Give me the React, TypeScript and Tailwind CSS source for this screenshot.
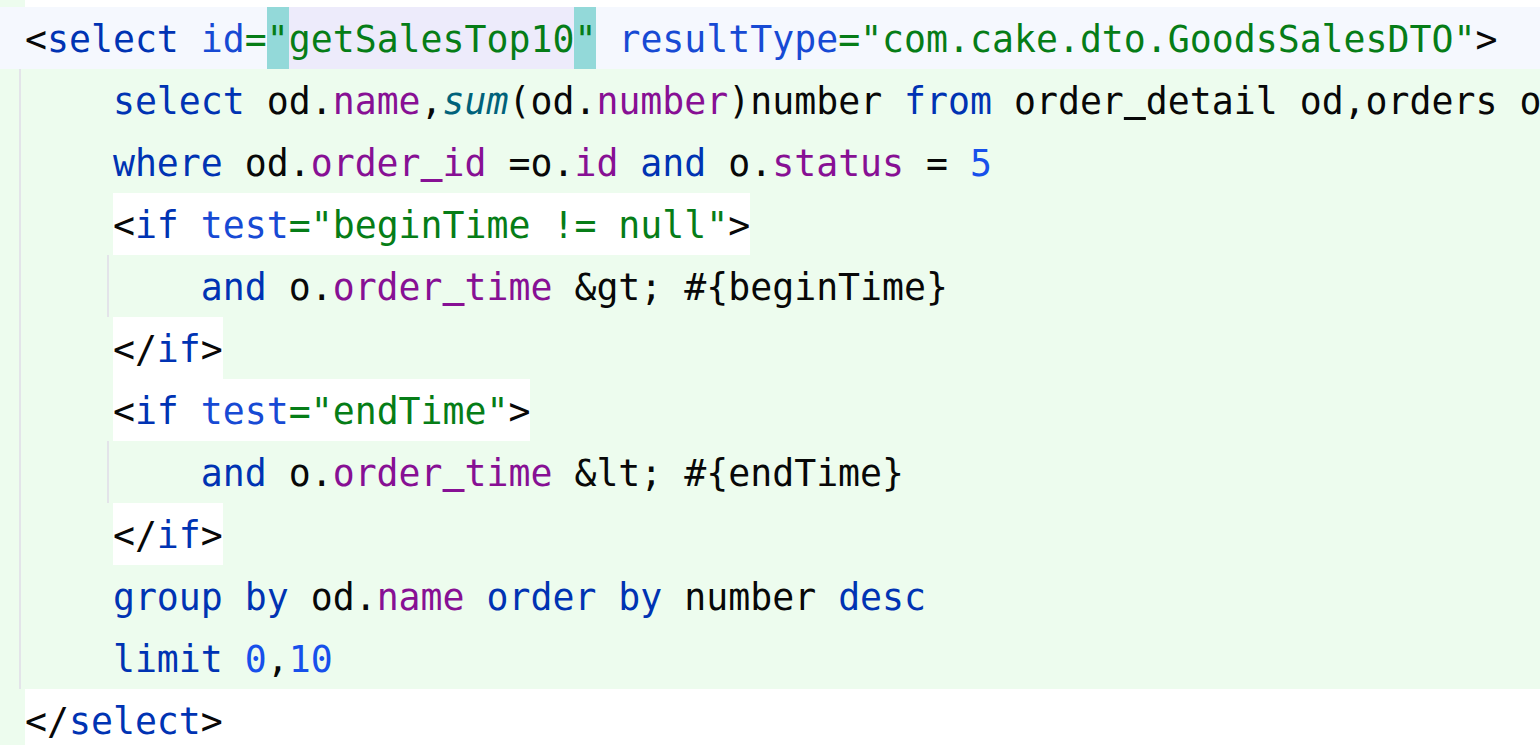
import React from 'react';

type P = { children?: React.ReactNode };

// token colours
const Br = ({ children }: P) => <span className="text-[#080808]">{children}</span>;
const Tag = ({ children }: P) => <span className="text-[#0033b3]">{children}</span>;
const Attr = ({ children }: P) => <span className="text-[#174ad4]">{children}</span>;
const Val = ({ children }: P) => <span className="text-[#067d17]">{children}</span>;
const Kw = ({ children }: P) => <span className="text-[#0033b3]">{children}</span>;
const Col = ({ children }: P) => <span className="text-[#871094]">{children}</span>;
const Num = ({ children }: P) => <span className="text-[#1750eb]">{children}</span>;
const Fn = ({ children }: P) => <span className="text-[#00627a] italic">{children}</span>;
const Tx = ({ children }: P) => <span className="text-[#080808]">{children}</span>;

const UnBlack = () => (
  <span className="text-transparent underline decoration-[3px] underline-offset-[3px] decoration-[#080808] [text-decoration-skip-ink:none]">_</span>
);
const UnPurple = () => (
  <span className="text-transparent underline decoration-[3px] underline-offset-[3px] decoration-[#871094] [text-decoration-skip-ink:none]">_</span>
);

// a run of text filling the full line height
function Seg({ children, className = '' }: P & { className?: string }) {
  return <div className={`pt-[4px] leading-[58px] ${className}`}>{children}</div>;
}

function Line({
  children,
  tone = 'green',
  guide = false,
}: {
  children?: React.ReactNode;
  tone?: 'green' | 'current' | 'plain';
  guide?: boolean;
}) {
  const gutterBg = tone === 'current' ? 'bg-[#f5f8fe]' : 'bg-[#edfcee]';
  const bodyBg = tone === 'current' ? 'bg-[#f5f8fe]' : tone === 'green' ? 'bg-[#edfcee]' : 'bg-white';
  return (
    <div className="flex h-[62px] shrink-0">
      <div className={`w-[25px] shrink-0 flex pl-[19px] ${gutterBg}`}>
        {guide && <div className="w-[2px] bg-[#e3e4e9]" />}
      </div>
      <div
        className={`flex-1 flex items-stretch whitespace-pre font-['DejaVu_Sans_Mono',monospace] text-[36.5px] ${bodyBg}`}
      >
        {children}
      </div>
    </div>
  );
}

// 8-column indent with the nested indent guide
const InnerIndent = () => (
  <>
    <div className="w-[82px] shrink-0" />
    <div className="w-[2px] shrink-0 bg-[#e3e4e9]" />
  </>
);

export default function App() {
  return (
    <div className="w-[1540px] h-[745px] overflow-hidden bg-white flex flex-col">
      {/* tail of the previous line */}
      <div className="flex h-[7px] shrink-0">
        <div className="w-[25px] bg-[#edfcee]" />
        <div className="flex-1 bg-white" />
      </div>

      <Line tone="current">
        <Seg><Br>&lt;</Br><Tag>select</Tag> <Attr>id</Attr><Val>=</Val></Seg>
        <Seg className="bg-[#93d9d9]"><Val>"</Val></Seg>
        <Seg className="bg-[#edebfb]"><Val>getSalesTop10</Val></Seg>
        <Seg className="bg-[#93d9d9]"><Val>"</Val></Seg>
        <Seg> <Attr>resultType</Attr><Val>="com.cake.dto.GoodsSalesDTO"</Val><Br>&gt;</Br></Seg>
      </Line>

      <Line guide>
        <Seg>
          {'    '}<Kw>select</Kw> <Tx>od.</Tx><Col>name</Col><Tx>,</Tx><Fn>sum</Fn><Tx>(od.</Tx><Col>number</Col>
          <Tx>)number </Tx><Kw>from</Kw><Tx> order</Tx><UnBlack /><Tx>detail od,orders o</Tx>
        </Seg>
      </Line>

      <Line guide>
        <Seg>
          {'    '}<Kw>where</Kw><Tx> od.</Tx><Col>order</Col><UnPurple /><Col>id</Col><Tx> =o.</Tx><Col>id</Col> <Kw>and</Kw>
          <Tx> o.</Tx><Col>status</Col><Tx> = </Tx><Num>5</Num>
        </Seg>
      </Line>

      <Line guide>
        <Seg>{'    '}</Seg>
        <Seg className="bg-white">
          <Br>&lt;</Br><Tag>if</Tag> <Attr>test</Attr><Val>="beginTime != null"</Val><Br>&gt;</Br>
        </Seg>
      </Line>

      <Line guide>
        <InnerIndent />
        <Seg className="pl-[91.8px]">
          <Kw>and</Kw><Tx> o.</Tx><Col>order</Col><UnPurple /><Col>time</Col><Tx> &amp;gt; #{'{'}beginTime{'}'}</Tx>
        </Seg>
      </Line>

      <Line guide>
        <Seg>{'    '}</Seg>
        <Seg className="bg-white"><Br>&lt;/</Br><Tag>if</Tag><Br>&gt;</Br></Seg>
      </Line>

      <Line guide>
        <Seg>{'    '}</Seg>
        <Seg className="bg-white">
          <Br>&lt;</Br><Tag>if</Tag> <Attr>test</Attr><Val>="endTime"</Val><Br>&gt;</Br>
        </Seg>
      </Line>

      <Line guide>
        <InnerIndent />
        <Seg className="pl-[91.8px]">
          <Kw>and</Kw><Tx> o.</Tx><Col>order</Col><UnPurple /><Col>time</Col><Tx> &amp;lt; #{'{'}endTime{'}'}</Tx>
        </Seg>
      </Line>

      <Line guide>
        <Seg>{'    '}</Seg>
        <Seg className="bg-white"><Br>&lt;/</Br><Tag>if</Tag><Br>&gt;</Br></Seg>
      </Line>

      <Line guide>
        <Seg>
          {'    '}<Kw>group by</Kw><Tx> od.</Tx><Col>name</Col> <Kw>order by</Kw><Tx> number </Tx><Kw>desc</Kw>
        </Seg>
      </Line>

      <Line guide>
        <Seg>{'    '}<Kw>limit</Kw> <Num>0</Num><Tx>,</Tx><Num>10</Num></Seg>
      </Line>

      <Line tone="plain">
        <Seg><Br>&lt;/</Br><Tag>select</Tag><Br>&gt;</Br></Seg>
      </Line>
    </div>
  );
}
